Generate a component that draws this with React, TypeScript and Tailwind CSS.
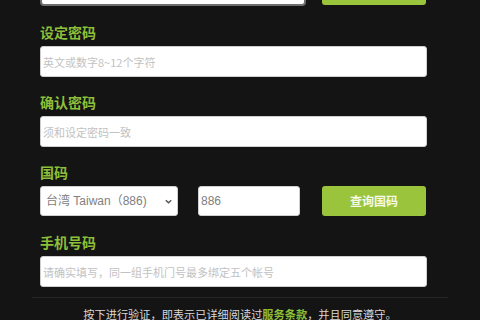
import React from "react";

const font = { fontFamily: '"Noto Sans CJK SC", "Noto Sans", "Liberation Sans", sans-serif' };
const latinFont = { fontFamily: '"Liberation Sans", "Noto Sans CJK SC", sans-serif' };

function Label({ children }: { children: React.ReactNode }) {
  return <div className="h-[20px] text-[14px] leading-[20px] font-bold text-[#8dbf39] mb-[4px]">{children}</div>;
}

function TextInput({ placeholder }: { placeholder: string }) {
  return (
    <input
      readOnly
      placeholder={placeholder}
      className="w-full h-[31px] rounded-[3px] bg-white px-[2px] text-[11px] text-[#555] placeholder:text-[#c2c2c2] outline-none border border-[#cfcfcf]"
      style={font}
    />
  );
}

export default function App() {
  return (
    <div className="w-[480px] h-[320px] overflow-hidden bg-[#141414]" style={font}>
      <div className="w-[387px] ml-[40px] flex flex-col">
        <div className="flex mt-[-25px] h-[31px]">
          <div className="w-[266px] h-[31px] rounded-[4px] bg-white border-2 border-[#6e6e6e]" />
          <div className="ml-[16px] w-[104px] h-[30px] rounded-[3px] bg-[#9ac43c]" />
        </div>

        <div className="mt-[16px]">
          <Label>设定密码</Label>
          <TextInput placeholder="英文或数字8~12个字符" />
        </div>

        <div className="mt-[15px]">
          <Label>确认密码</Label>
          <TextInput placeholder="须和设定密码一致" />
        </div>

        <div className="mt-[15px]">
          <Label>国码</Label>
          <div className="flex h-[30px]">
            <div className="w-[138px] h-[30px] rounded-[3px] bg-white flex items-center justify-between pl-[5px] pr-[4px] border border-[#cfcfcf]">
              <span className="text-[12px] text-[#808080]" style={latinFont}>台湾 Taiwan（886)</span>
              <svg width="9" height="9" viewBox="0 0 10 10">
                <path d="M2 3.5 L5 6.5 L8 3.5" fill="none" stroke="#555" strokeWidth="1.6" />
              </svg>
            </div>
            <div className="ml-[20px] w-[102px] h-[30px] rounded-[3px] bg-white flex items-center pl-[2px] border border-[#cfcfcf]">
              <span className="text-[12px] text-[#808080]" style={latinFont}>886</span>
            </div>
            <div className="ml-[22px] w-[104px] h-[30px] rounded-[3px] bg-[#9ac43c] flex items-center justify-center">
              <span className="text-[12px] font-bold text-[#f4f9ea]">查询国码</span>
            </div>
          </div>
        </div>

        <div className="mt-[16px]">
          <Label>手机号码</Label>
          <TextInput placeholder="请确实填写，同一组手机门号最多绑定五个帐号" />
        </div>
      </div>

      <div className="mx-[32px] mt-[10px] border-t border-[#262626] pt-[8px] text-center text-[11.2px] leading-[16px] text-[#d8d8d8]">
        按下进行验证，即表示已详细阅读过<span className="font-bold text-[#8dbf39]">服务条款</span>，并且同意遵守。
      </div>
    </div>
  );
}
